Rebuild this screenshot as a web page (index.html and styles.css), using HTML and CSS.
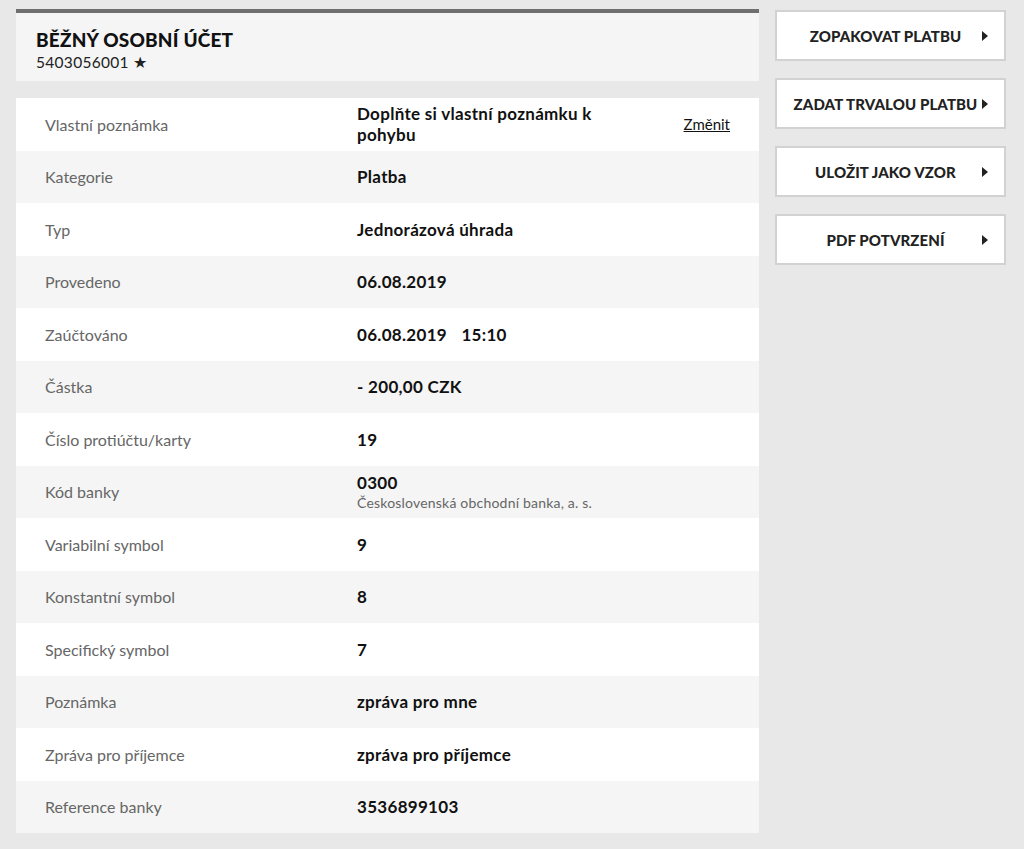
FILE: index.html
```html
<!DOCTYPE html>
<html lang="cs">
<head>
<meta charset="utf-8">
<title>Detail pohybu</title>
<link rel="stylesheet" href="styles.css">
</head>
<body>
<div class="page">
  <main class="main">
    <header class="account">
      <h1 class="account-title">BĚŽNÝ OSOBNÍ ÚČET</h1>
      <div class="account-number">5403056001 <span class="star">★</span></div>
    </header>
    <section class="details">
      <div class="row">
        <div class="label">Vlastní poznámka</div>
        <div class="value value-note">Doplňte si vlastní poznámku k pohybu</div>
        <a class="change" href="#">Změnit</a>
      </div>
      <div class="row alt"><div class="label">Kategorie</div><div class="value">Platba</div></div>
      <div class="row"><div class="label">Typ</div><div class="value">Jednorázová úhrada</div></div>
      <div class="row alt"><div class="label">Provedeno</div><div class="value">06.08.2019</div></div>
      <div class="row"><div class="label">Zaúčtováno</div><div class="value">06.08.2019 <span class="time">15:10</span></div></div>
      <div class="row alt"><div class="label">Částka</div><div class="value">- 200,00 CZK</div></div>
      <div class="row"><div class="label">Číslo protiúčtu/karty</div><div class="value">19</div></div>
      <div class="row alt"><div class="label">Kód banky</div><div class="value">0300<span class="sub">Československá obchodní banka, a. s.</span></div></div>
      <div class="row"><div class="label">Variabilní symbol</div><div class="value">9</div></div>
      <div class="row alt"><div class="label">Konstantní symbol</div><div class="value">8</div></div>
      <div class="row"><div class="label">Specifický symbol</div><div class="value">7</div></div>
      <div class="row alt"><div class="label">Poznámka</div><div class="value">zpráva pro mne</div></div>
      <div class="row"><div class="label">Zpráva pro příjemce</div><div class="value">zpráva pro příjemce</div></div>
      <div class="row alt"><div class="label">Reference banky</div><div class="value">3536899103</div></div>
    </section>
  </main>
  <aside class="actions">
    <a class="btn" href="#"><span class="btn-text">ZOPAKOVAT PLATBU</span><span class="arrow"></span></a>
    <a class="btn" href="#"><span class="btn-text">ZADAT TRVALOU PLATBU</span><span class="arrow"></span></a>
    <a class="btn" href="#"><span class="btn-text">ULOŽIT JAKO VZOR</span><span class="arrow"></span></a>
    <a class="btn" href="#"><span class="btn-text">PDF POTVRZENÍ</span><span class="arrow"></span></a>
  </aside>
</div>
</body>
</html>
```
FILE: styles.css
```css
html, body {
  margin: 0;
  padding: 0;
  background: #e8e8e8;
}
body {
  font-family: Lato, "Noto Sans", sans-serif;
  color: #111;
}
.page {
  display: flex;
  align-items: flex-start;
  gap: 16px;
  padding: 9px 18px 0 16px;
}
.main {
  width: 743px;
  flex: none;
}
.account {
  background: #f5f5f5;
  border-top: 4px solid #6f6f6f;
  height: 68px;
  box-sizing: border-box;
  height: 72px;
  padding: 16px 20px 0;
}
.account-title {
  margin: 0;
  font-size: 19px;
  font-weight: 900;
  letter-spacing: 0.2px;
  line-height: 22px;
  color: #111;
}
.account-number {
  margin-top: 2px;
  font-size: 15.5px;
  line-height: 19px;
  letter-spacing: 0.3px;
  color: #222;
}
.details {
  margin-top: 17px;
  background: #fff;
}
.row {
  display: flex;
  align-items: center;
  height: 52.5px;
  padding: 0 29px;
  background: #fff;
}
.row.alt { background: #f5f5f5; }
.label {
  width: 312px;
  flex: none;
  font-size: 16px;
  color: #666;
}
.value {
  font-size: 17px;
  font-weight: 700;
  letter-spacing: 0.3px;
  color: #111;
}
.value-note {
  width: 250px;
  line-height: 21px;
}
.time { margin-left: 10px; }
.sub {
  display: block;
  font-size: 14px;
  letter-spacing: 0.2px;
  font-weight: 400;
  color: #666;
  margin-top: 1px;
}
.change {
  margin-left: auto;
  font-size: 15px;
  color: #111;
  text-decoration: underline;
}
.actions {
  display: flex;
  flex-direction: column;
  gap: 17px;
  padding-top: 1px;
  width: 231px;
  flex: none;
}
.btn {
  height: 51px;
  box-sizing: border-box;
  border: 2px solid #d2d2d2;
  background: #fff;
  display: flex;
  align-items: center;
  justify-content: center;
  position: relative;
  padding-right: 10px;
  text-decoration: none;
  color: #222;
}
.btn-text {
  font-size: 15px;
  font-weight: 900;
  letter-spacing: 0.1px;
}
.arrow {
  position: absolute;
  right: 16px;
  top: 50%;
  margin-top: -5px;
  width: 0;
  height: 0;
  border-left: 6px solid #222;
  border-top: 5px solid transparent;
  border-bottom: 5px solid transparent;
}
```
